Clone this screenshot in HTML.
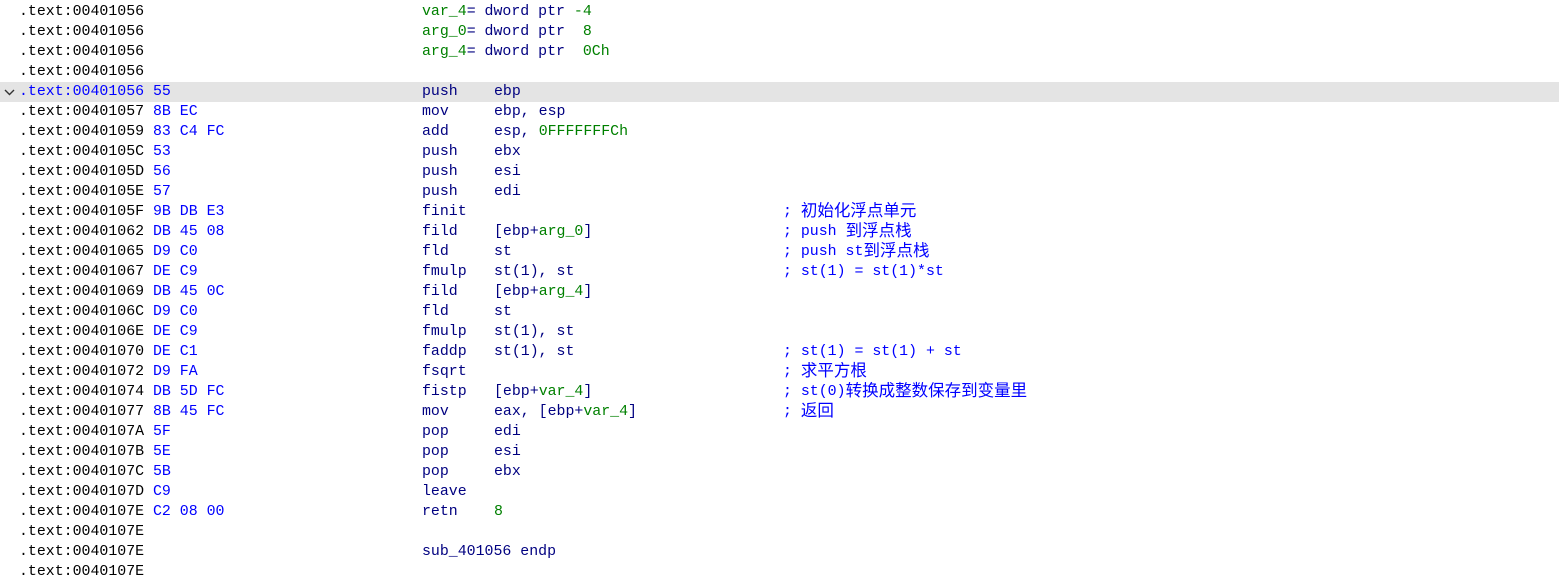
<!DOCTYPE html>
<html><head><meta charset="utf-8"><style>
body{margin:0;background:#fff;width:1559px;height:576px;overflow:hidden;position:relative;font-family:"Liberation Mono","Noto Sans CJK SC",monospace;font-size:14.9px;color:#000080}
.r{position:absolute;left:0;width:1559px;height:20px;line-height:20px;white-space:pre}
.r span{position:absolute;top:0}
.a{left:19px;color:#000}
.b{left:153px;color:#0000ff}
.m{left:422px}
.o{left:494px}
.c{left:783px;color:#0000ff;height:20px;overflow:visible}
.g{color:#008000;font-style:normal;font-weight:normal}
.z{font-family:"Noto Sans CJK SC",sans-serif;font-size:16.5px;font-style:normal;display:inline-block;vertical-align:top;height:20px;line-height:20px;position:relative;top:-3px}
.hl{background:#e4e4e4}
.hl .a{color:#0000ff}
</style></head><body>
<div class="r" style="top:2px"><span class="a">.text:00401056</span><span class="m"><i class="g">var_4</i>= dword ptr <i class="g">-4</i></span></div>
<div class="r" style="top:22px"><span class="a">.text:00401056</span><span class="m"><i class="g">arg_0</i>= dword ptr  <i class="g">8</i></span></div>
<div class="r" style="top:42px"><span class="a">.text:00401056</span><span class="m"><i class="g">arg_4</i>= dword ptr  <i class="g">0Ch</i></span></div>
<div class="r" style="top:62px"><span class="a">.text:00401056</span></div>
<div class="r hl" style="top:82px"><svg style="position:absolute;left:4px;top:7px" width="11" height="7" viewBox="0 0 11 7"><path d="M1 1 L5.5 5.5 L10 1" fill="none" stroke="#333" stroke-width="1.4"/></svg><span class="a">.text:00401056</span><span class="b">55</span><span class="m">push</span><span class="o">ebp</span></div>
<div class="r" style="top:102px"><span class="a">.text:00401057</span><span class="b">8B EC</span><span class="m">mov</span><span class="o">ebp, esp</span></div>
<div class="r" style="top:122px"><span class="a">.text:00401059</span><span class="b">83 C4 FC</span><span class="m">add</span><span class="o">esp, <b class="g">0FFFFFFFCh</b></span></div>
<div class="r" style="top:142px"><span class="a">.text:0040105C</span><span class="b">53</span><span class="m">push</span><span class="o">ebx</span></div>
<div class="r" style="top:162px"><span class="a">.text:0040105D</span><span class="b">56</span><span class="m">push</span><span class="o">esi</span></div>
<div class="r" style="top:182px"><span class="a">.text:0040105E</span><span class="b">57</span><span class="m">push</span><span class="o">edi</span></div>
<div class="r" style="top:202px"><span class="a">.text:0040105F</span><span class="b">9B DB E3</span><span class="m">finit</span><span class="c">; <i class="z">初始化浮点单元</i></span></div>
<div class="r" style="top:222px"><span class="a">.text:00401062</span><span class="b">DB 45 08</span><span class="m">fild</span><span class="o">[ebp+<b class="g">arg_0</b>]</span><span class="c">; push <i class="z">到浮点栈</i></span></div>
<div class="r" style="top:242px"><span class="a">.text:00401065</span><span class="b">D9 C0</span><span class="m">fld</span><span class="o">st</span><span class="c">; push st<i class="z">到浮点栈</i></span></div>
<div class="r" style="top:262px"><span class="a">.text:00401067</span><span class="b">DE C9</span><span class="m">fmulp</span><span class="o">st(1), st</span><span class="c">; st(1) = st(1)*st</span></div>
<div class="r" style="top:282px"><span class="a">.text:00401069</span><span class="b">DB 45 0C</span><span class="m">fild</span><span class="o">[ebp+<b class="g">arg_4</b>]</span></div>
<div class="r" style="top:302px"><span class="a">.text:0040106C</span><span class="b">D9 C0</span><span class="m">fld</span><span class="o">st</span></div>
<div class="r" style="top:322px"><span class="a">.text:0040106E</span><span class="b">DE C9</span><span class="m">fmulp</span><span class="o">st(1), st</span></div>
<div class="r" style="top:342px"><span class="a">.text:00401070</span><span class="b">DE C1</span><span class="m">faddp</span><span class="o">st(1), st</span><span class="c">; st(1) = st(1) + st</span></div>
<div class="r" style="top:362px"><span class="a">.text:00401072</span><span class="b">D9 FA</span><span class="m">fsqrt</span><span class="c">; <i class="z">求平方根</i></span></div>
<div class="r" style="top:382px"><span class="a">.text:00401074</span><span class="b">DB 5D FC</span><span class="m">fistp</span><span class="o">[ebp+<b class="g">var_4</b>]</span><span class="c">; st(0)<i class="z">转换成整数保存到变量里</i></span></div>
<div class="r" style="top:402px"><span class="a">.text:00401077</span><span class="b">8B 45 FC</span><span class="m">mov</span><span class="o">eax, [ebp+<b class="g">var_4</b>]</span><span class="c">; <i class="z">返回</i></span></div>
<div class="r" style="top:422px"><span class="a">.text:0040107A</span><span class="b">5F</span><span class="m">pop</span><span class="o">edi</span></div>
<div class="r" style="top:442px"><span class="a">.text:0040107B</span><span class="b">5E</span><span class="m">pop</span><span class="o">esi</span></div>
<div class="r" style="top:462px"><span class="a">.text:0040107C</span><span class="b">5B</span><span class="m">pop</span><span class="o">ebx</span></div>
<div class="r" style="top:482px"><span class="a">.text:0040107D</span><span class="b">C9</span><span class="m">leave</span></div>
<div class="r" style="top:502px"><span class="a">.text:0040107E</span><span class="b">C2 08 00</span><span class="m">retn</span><span class="o g">8</span></div>
<div class="r" style="top:522px"><span class="a">.text:0040107E</span></div>
<div class="r" style="top:542px"><span class="a">.text:0040107E</span><span class="m">sub_401056 endp</span></div>
<div class="r" style="top:562px"><span class="a">.text:0040107E</span></div>
</body></html>
